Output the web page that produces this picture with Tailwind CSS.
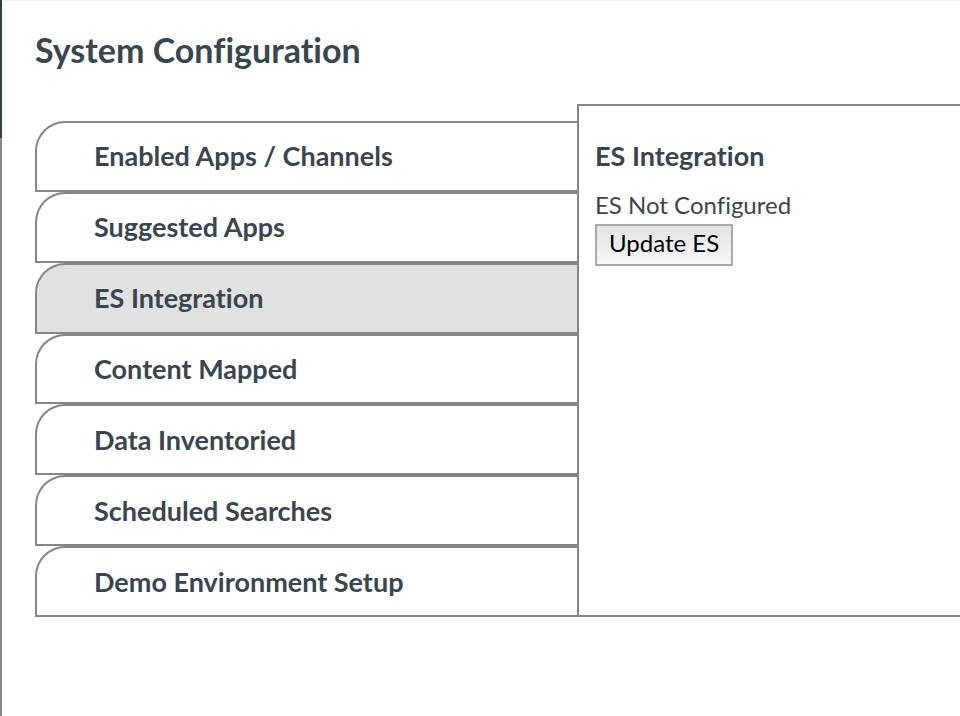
<!DOCTYPE html>
<html lang="en">
<head>
<meta charset="utf-8">
<title>System Configuration</title>
<script src="https://cdn.jsdelivr.net/npm/@tailwindcss/browser@4"></script>
</head>
<body class="flex min-h-screen overflow-x-hidden bg-white font-['Lato','Open_Sans',sans-serif] text-[#3a464f] [font-variant-ligatures:none]">
<div class="flex w-[2px] shrink-0 flex-col bg-[#858a8f]"><div class="h-[138px] bg-[#303d4b]"></div></div>
<main class="min-w-0 flex-1 border-t border-[#f5f5f6] pl-[33px]">
  <h1 class="pt-[29px] text-[34px] leading-[40px] font-bold">System Configuration</h1>
  <div class="mt-[34px] flex min-h-[513px]">
    <nav aria-label="Configuration sections" class="flex w-[542px] shrink-0 flex-col pt-[17px] text-[27px] leading-[32px] font-bold">
      <a href="#apps" class="flex flex-1 items-center rounded-tl-[30px] border-2 border-r-0 border-[#868686] pl-[57px]">Enabled Apps / Channels</a>
      <a href="#suggested" class="flex flex-1 items-center rounded-tl-[30px] border-2 border-r-0 border-[#868686] pl-[57px]">Suggested Apps</a>
      <a href="#es" aria-current="page" class="flex flex-1 items-center rounded-tl-[30px] border-2 border-r-0 border-[#868686] bg-[#e1e1e1] pl-[57px]">ES Integration</a>
      <a href="#content" class="flex flex-1 items-center rounded-tl-[30px] border-2 border-r-0 border-[#868686] pl-[57px]">Content Mapped</a>
      <a href="#data" class="flex flex-1 items-center rounded-tl-[30px] border-2 border-r-0 border-[#868686] pl-[57px]">Data Inventoried</a>
      <a href="#searches" class="flex flex-1 items-center rounded-tl-[30px] border-2 border-r-0 border-[#868686] pl-[57px]">Scheduled Searches</a>
      <a href="#demo" class="flex flex-1 items-center rounded-tl-[30px] border-2 border-r-0 border-[#868686] pl-[57px]">Demo Environment Setup</a>
    </nav>
    <section id="es" class="min-w-0 flex-1 border-2 border-r-0 border-[#868686] pt-[34px] pl-[16px]">
      <h2 class="text-[27px] leading-[32px] font-bold">ES Integration</h2>
      <p class="mt-[19px] text-[24px] leading-[28px]">ES Not Configured</p>
      <button type="button" class="mt-[5px] block h-[42px] border-2 border-[#a9a9a9] bg-linear-to-b from-[#e3e3e3] to-[#f7f7f7] px-[12px] pb-[5px] text-[24px] leading-[28px] text-black">Update ES</button>
    </section>
  </div>
</main>
</body>
</html>
